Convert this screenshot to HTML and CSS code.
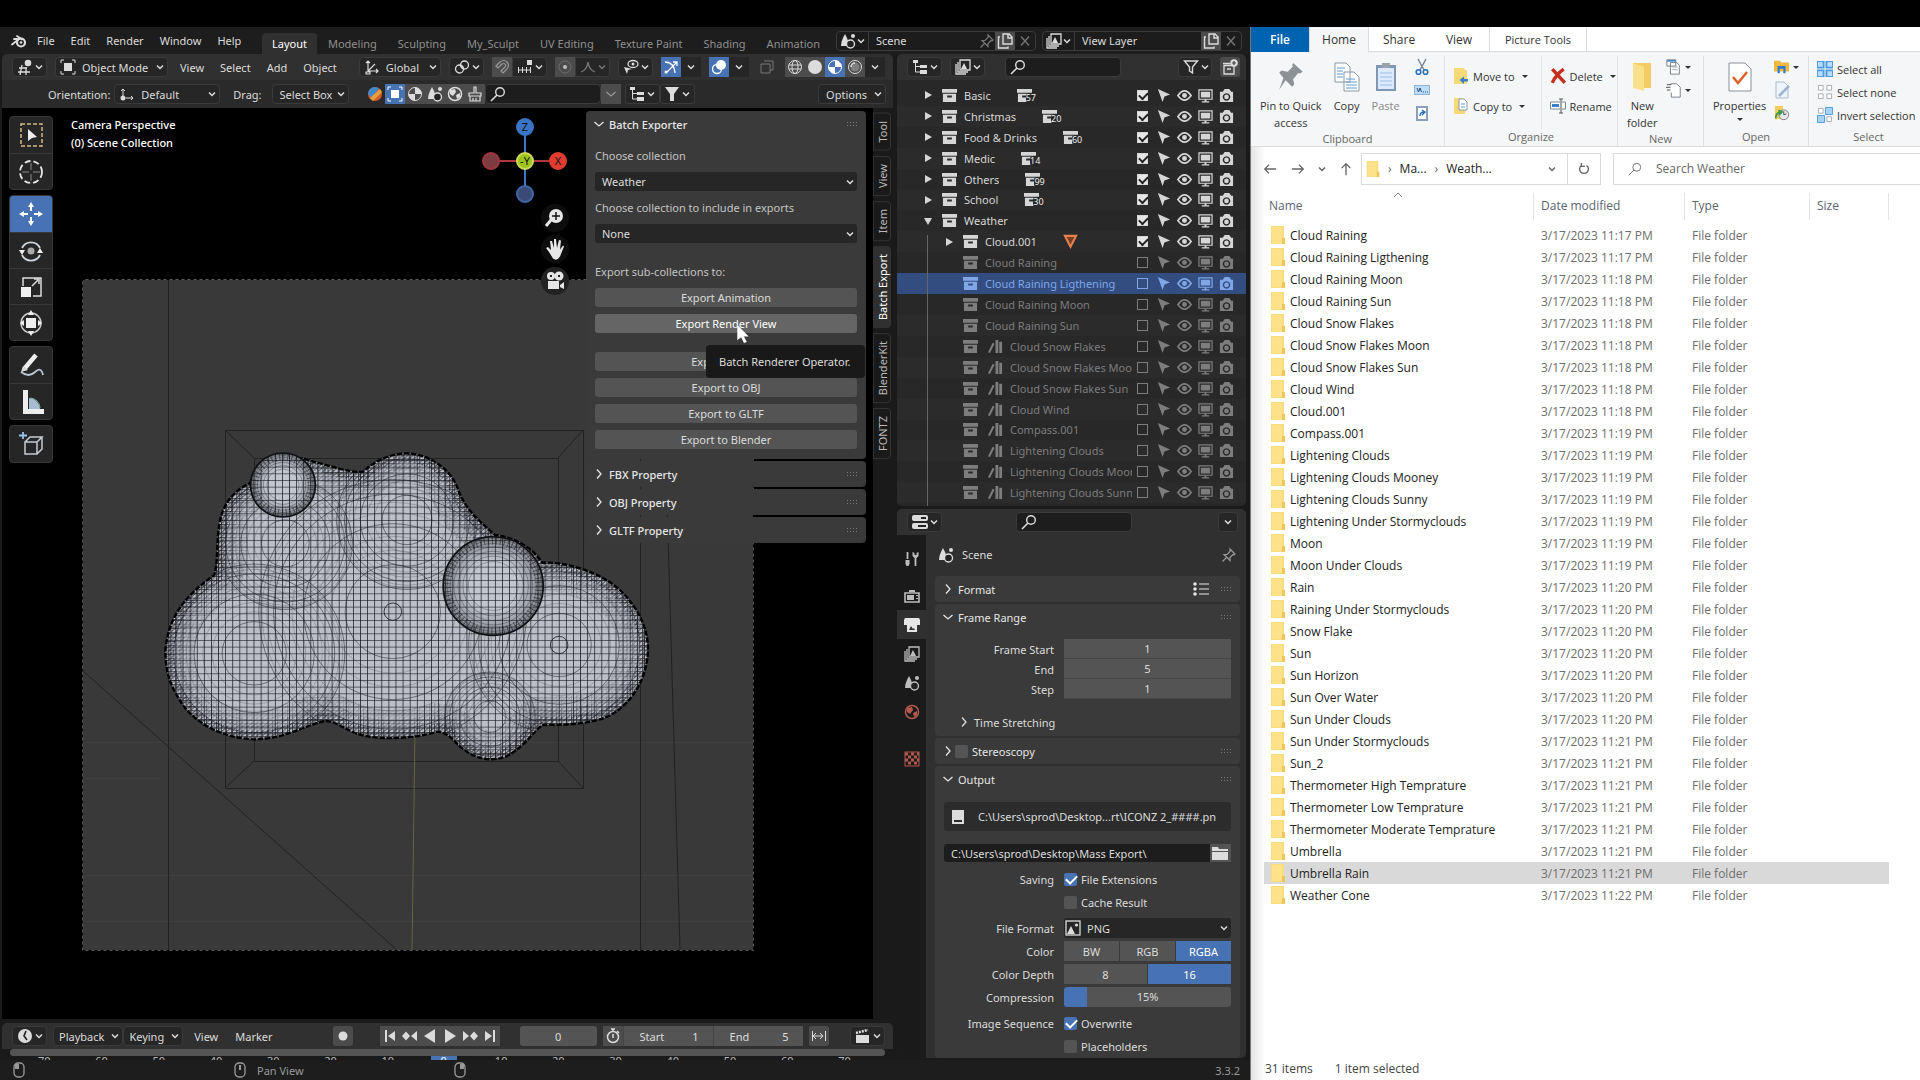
FILE: index.html
```html
<!DOCTYPE html>
<html lang="en">
<head>
  <meta charset="UTF-8" />
  <meta name="viewport" content="width=device-width, initial-scale=1.0"/>
  <title>Batch Exporter</title>
  <link rel="stylesheet" href="styles.css">
</head>
<body>
  <!-- icon sheet -->
  <svg class="sheet">
    <symbol id="down" viewBox="0 0 10 16"><path d="M2 6.500l3 3 3-3" fill="none" stroke="currentColor" stroke-width="1.500"/></symbol>
    <symbol id="right" viewBox="0 0 10 16"><path d="M3 3.500l4 4.500-4 4.500" fill="none" stroke="currentColor" stroke-width="1.300"/></symbol>
    <symbol id="open" viewBox="0 0 10 16"><path d="M.5 6l4.500 4 4.500-4" fill="none" stroke="currentColor" stroke-width="1.300"/></symbol>
    <symbol id="dots" viewBox="0 0 12 6"><path d="M0 1.500h12M0 4.500h12" stroke="currentColor" stroke-width="1" stroke-dasharray="1 2"/></symbol>
    <symbol id="blender" viewBox="0 0 16 16"><path d="M1 11.500L8 6H3M6 3l5 3.500" fill="none" stroke="currentColor" stroke-width="1.800" stroke-linecap="round"/><circle cx="10" cy="9.500" r="4" fill="none" stroke="currentColor" stroke-width="2.200"/><circle cx="10" cy="9.500" r="1.300" fill="currentColor"/></symbol>
    <symbol id="view3d" viewBox="0 0 16 16"><path d="M2 9h8M1 13h12M5 6L3 16M9 8l0 8" stroke="currentColor" stroke-width="1.300"/><circle cx="11" cy="4" r="3.300" fill="currentColor"/></symbol>
    <symbol id="object" viewBox="0 0 16 16"><rect x="4" y="4" width="8" height="8" fill="currentColor"/><path d="M1 4V1h3M12 1h3v3M15 12v3h-3M4 15H1v-3" fill="none" stroke="currentColor"/></symbol>
    <symbol id="axes" viewBox="0 0 16 16"><path d="M4 2v10h10M4 12l7-7M2 4l2-2 2 2M12 10l2 2-2 2M2 13h4v2H2z" fill="none" stroke="currentColor" stroke-width="1.200"/></symbol>
    <symbol id="orient" viewBox="0 0 16 16"><path d="M4 10V3M2 5l2-2 2 2M7 12h7M12 10l2 2-2 2" fill="none" stroke="currentColor"/><circle cx="4" cy="12" r="2.500" fill="currentColor"/></symbol>
    <symbol id="link" viewBox="0 0 16 16"><circle cx="5.500" cy="10" r="4" fill="none" stroke="currentColor" stroke-width="1.300"/><circle cx="10.500" cy="6" r="4" fill="none" stroke="currentColor" stroke-width="1.300"/><circle cx="8" cy="8" r="1.300" fill="currentColor"/></symbol>
    <symbol id="magnet" viewBox="0 0 16 16"><path d="M2 7l4-4q4-3 7 0t0 7l-4 4-2-2 4-4q1.500-2 0-3t-3 0L4 9z" fill="none" stroke="currentColor" stroke-width="1.200"/></symbol>
    <symbol id="snap" viewBox="0 0 16 16"><path d="M1 11h13M1.500 8v6M5.500 8v6M9.500 8v6M13.500 8v6" stroke="currentColor"/><rect x="10" y="1" width="5" height="5" fill="currentColor"/></symbol>
    <symbol id="prop" viewBox="0 0 16 16"><circle cx="8" cy="8" r="6" fill="none" stroke="currentColor" opacity=".4"/><circle cx="8" cy="8" r="2" fill="#bbb"/></symbol>
    <symbol id="falloff" viewBox="0 0 16 16"><path d="M1 13q6-2 7-10 1 8 7 10" fill="none" stroke="currentColor" stroke-width="1.300"/></symbol>
    <symbol id="eyecur" viewBox="0 0 16 16"><path d="M1 8l8 2-4 1-1 4z" fill="currentColor"/><ellipse cx="10" cy="5" rx="5" ry="3.500" fill="none" stroke="currentColor" stroke-width="1.300"/><circle cx="10" cy="5" r="1.500" fill="currentColor"/></symbol>
    <symbol id="gizmo" viewBox="0 0 16 16"><path d="M2 3q9 0 10 11M3 14L14 3M10 3h4v4" fill="none" stroke="currentColor" stroke-width="1.300"/><circle cx="3" cy="13" r="1.500" fill="currentColor"/></symbol>
    <symbol id="overlay" viewBox="0 0 16 16"><circle cx="10" cy="6" r="5" fill="currentColor"/><circle cx="6" cy="10" r="4.500" fill="none" stroke="currentColor" stroke-width="1.300"/></symbol>
    <symbol id="xray" viewBox="0 0 16 16"><path d="M2 5h9v9H2zM5 2h9v9h-3" fill="none" stroke="currentColor"/></symbol>
    <symbol id="wire" viewBox="0 0 16 16"><circle cx="8" cy="8" r="6.500" fill="none" stroke="currentColor"/><ellipse cx="8" cy="8" rx="3" ry="6.500" fill="none" stroke="currentColor"/><path d="M2 6h12M2 10h12" stroke="currentColor"/></symbol>
    <symbol id="solid" viewBox="0 0 16 16"><circle cx="8" cy="8" r="7" fill="currentColor"/></symbol>
    <symbol id="material" viewBox="0 0 16 16"><circle cx="8" cy="8" r="6.500" fill="none" stroke="currentColor"/><path d="M8 1.500v6.500h6.500a6.500 6.500 0 0 0-6.500-6.500M8 8v6.500A6.500 6.500 0 0 1 1.500 8z" fill="currentColor"/></symbol>
    <symbol id="rendered" viewBox="0 0 16 16"><circle cx="8" cy="8" r="6.500" fill="none" stroke="currentColor"/><circle cx="8" cy="8" r="4.500" fill="currentColor" opacity=".35"/><path d="M4 8a4 4 0 0 1 4-4" fill="none" stroke="currentColor" stroke-width="1.500"/></symbol>
    <symbol id="tree" viewBox="0 0 16 16"><path d="M1 1h5v3H1zM8 6h7v3H8zM8 11h7v4H8z" fill="currentColor"/><path d="M3.500 4v9H8M3.500 7.500H8" fill="none" stroke="currentColor"/></symbol>
    <symbol id="images" viewBox="0 0 16 16"><path d="M5 1h10v10H5zM3 3v10h10M1 5v10h10" fill="none" stroke="currentColor" stroke-width="1.300"/><path d="M6 10l3-6 3 6z" fill="currentColor"/></symbol>
    <symbol id="search" viewBox="0 0 16 16"><circle cx="10" cy="6" r="4.300" fill="none" stroke="currentColor" stroke-width="1.400"/><path d="M7 9l-6 6" stroke="currentColor" stroke-width="1.600"/></symbol>
    <symbol id="filter" viewBox="0 0 16 16"><path d="M1.500 2h13L9.500 8v6l-3-2V8z" fill="none" stroke="currentColor" stroke-width="1.400"/></symbol>
    <symbol id="funnel" viewBox="0 0 16 16"><path d="M1 1h14L10 8v7H6V8z" fill="currentColor"/></symbol>
    <symbol id="newcol" viewBox="0 0 16 16"><path d="M1 4.500h7M2 6.500h10V15H2zM5 10h4" fill="none" stroke="currentColor" stroke-width="1.300"/><circle cx="12" cy="4" r="3.800" fill="currentColor"/><path d="M12 2v4M10 4h4" stroke="#444" stroke-width="1.200"/></symbol>
    <symbol id="scene" viewBox="0 0 16 16"><path d="M5 1q5 9 3 12H1Q1 8 5 1" fill="currentColor"/><circle cx="10.500" cy="11" r="4" fill="#222" stroke="currentColor" stroke-width="1.400"/><circle cx="13" cy="3" r="2" fill="currentColor"/></symbol>
    <symbol id="pin" viewBox="0 0 16 16"><path d="M9 2l5 5-1 1-1-.5-3 3v3L3 7.500h3l3-3zM5.500 10.500L1.500 14.500" fill="none" stroke="currentColor" stroke-width="1.200"/></symbol>
    <symbol id="copy" viewBox="0 0 16 16"><path d="M6 1h6l3 3v7H6zM3 4H1.500v11H11v-1.500M11 1v4h4" fill="none" stroke="currentColor" stroke-width="1.400"/></symbol>
    <symbol id="x" viewBox="0 0 16 16"><path d="M4 3.500l8 9M12 3.500l-8 9" stroke="currentColor" stroke-width="1.300"/></symbol>
    <symbol id="coll" viewBox="0 0 16 16"><path d="M0 1h16v4H0zM1 6h14v9H1zM5.500 8v2h5V8z" fill="currentColor" fill-rule="evenodd"/></symbol>
    <symbol id="cursor" viewBox="0 0 16 16"><path d="M2 1l13 6-6 2-2 6z" fill="currentColor"/></symbol>
    <symbol id="eye" viewBox="0 0 16 16"><path d="M1 8q7-10 14 0-7 10-14 0z" fill="none" stroke="currentColor" stroke-width="1.800"/><circle cx="8" cy="8" r="2.600" fill="currentColor"/></symbol>
    <symbol id="monitor" viewBox="0 0 16 16"><path d="M1 2h14v10H1z" fill="none" stroke="currentColor" stroke-width="1.300"/><path d="M3 4h10v6H3zM4 14h8v1.500H4zM7 12h2v3H7z" fill="currentColor"/></symbol>
    <symbol id="camera" viewBox="0 0 16 16"><path d="M1 4h3l2-3h5l2 3h2v11H1zM8 5.500a4 4 0 1 0 .01 0z" fill="currentColor" fill-rule="evenodd"/><circle cx="8" cy="9.500" r="2.500" fill="currentColor"/></symbol>
    <symbol id="mesh" viewBox="0 0 16 16"><path d="M2 2h12L8 13.500z" fill="#7a3f22" stroke="#e8824d" stroke-width="2.200"/></symbol>
    <symbol id="books" viewBox="0 0 16 16"><path d="M5 4l2 1-5 10-2-1zM8 1h3v14H8zM12 3h3v12h-3z" fill="currentColor"/></symbol>
    <symbol id="tools" viewBox="0 0 16 16"><path d="M3.500 1v7M11.500 6v9" stroke="currentColor" stroke-width="1.800"/><path d="M1.500 9h4v4l-1 2h-2l-1-2zM8.500 1v4l2 2h2l2-2V1l-2 1v2h-2V2z" fill="currentColor"/></symbol>
    <symbol id="tv" viewBox="0 0 16 16"><path d="M1 5h14v9H1z" fill="none" stroke="currentColor" stroke-width="1.600"/><path d="M3 7h7v5H3zM12 7h2v1h-2zM12 10h2v1h-2zM5 2h6v2H5z" fill="currentColor"/></symbol>
    <symbol id="printer" viewBox="0 0 16 16"><path d="M0 3l1-2h14l1 2v5H0zM3 7h10v8H3z" fill="currentColor"/><path d="M5 13l2-4 2 3 1-1 1 2z" fill="#303030"/></symbol>
    <symbol id="world" viewBox="0 0 16 16"><circle cx="8" cy="8" r="6.500" fill="none" stroke="currentColor" stroke-width="1.500"/><path d="M3 4l5-1 1 3-3 4-3-2zM9 9l4-2v4l-3 2z" fill="currentColor"/></symbol>
    <symbol id="checker" viewBox="0 0 16 16"><rect x="1" y="1" width="14" height="14" fill="none" stroke="currentColor"/><path d="M1 3h14M1 9h14" stroke="currentColor" stroke-width="3" stroke-dasharray="3 3"/><path d="M4 6h12M4 12h12" stroke="currentColor" stroke-width="3" stroke-dasharray="3 3"/></symbol>
    <symbol id="disk" viewBox="0 0 16 16"><path d="M2 1h12v14H2zM4 11h8v2H4z" fill="currentColor" fill-rule="evenodd"/></symbol>
    <symbol id="folder" viewBox="0 0 16 16"><path d="M0 2h6l1 2h9v2H0zM0 7h16v8H0z" fill="currentColor"/></symbol>
    <symbol id="image" viewBox="0 0 16 16"><rect x="1" y="1" width="14" height="14" fill="none" stroke="currentColor" stroke-width="1.300"/><path d="M2 14l4-8 4 8z" fill="currentColor"/><circle cx="11.500" cy="5" r="1.600" fill="currentColor"/></symbol>
    <symbol id="presets" viewBox="0 0 16 16"><path d="M6 3h10M6 8h10M6 13h10" stroke="currentColor" stroke-width="1.200"/><circle cx="2" cy="3" r="1.800" fill="currentColor"/><circle cx="2" cy="8" r="1.800" fill="currentColor"/><circle cx="2" cy="13" r="1.800" fill="currentColor"/></symbol>
    <symbol id="props" viewBox="0 0 16 16"><rect x="0" y="1" width="16" height="6" rx="2" fill="currentColor"/><rect x="0" y="9" width="16" height="6" rx="2" fill="currentColor"/><path d="M9 3h5v2H9zM6 11h8v2H6z" fill="#222"/></symbol>
    <symbol id="clock" viewBox="0 0 16 16"><circle cx="8" cy="8" r="7" fill="currentColor"/><path d="M9 3L7 8l3 4" fill="none" stroke="#222" stroke-width="1.600"/></symbol>
    <symbol id="dot" viewBox="0 0 16 16"><circle cx="8" cy="8" r="4.500" fill="currentColor"/></symbol>
    <symbol id="first" viewBox="0 0 16 16"><path d="M3 2h2v12H3zM13 3v10L6 8z" fill="currentColor"/></symbol>
    <symbol id="prevkey" viewBox="0 0 16 16"><path d="M0 8l4-4.500L8 8l-4 4.500zM15 3v10L9 8z" fill="currentColor"/></symbol>
    <symbol id="playback" viewBox="0 0 16 16"><path d="M13 1v14L2 8z" fill="currentColor"/></symbol>
    <symbol id="stopwatch" viewBox="0 0 16 16"><circle cx="8" cy="9" r="5.500" fill="none" stroke="currentColor" stroke-width="1.500"/><path d="M6 1h4M8 1v3M12 3l2 2M8 6v4" stroke="currentColor" stroke-width="1.500"/></symbol>
    <symbol id="range" viewBox="0 0 16 16"><path d="M1.500 3v10M14.500 3v10M2 8h10M5 5L2 8l3 3M9 5l3 3-3 3" fill="none" stroke="currentColor"/></symbol>
    <symbol id="clapper" viewBox="0 0 16 16"><path d="M1 7h13v8H1z" fill="currentColor"/><path d="M1 5l12-3" stroke="currentColor" stroke-width="2.500" stroke-dasharray="2 1"/></symbol>
    <symbol id="brush" viewBox="0 0 16 16"><path d="M7 1h2v6h5v3H2V7h5zM3 10v5h10v-5M6 15v-3M9 15v-3" fill="none" stroke="currentColor" stroke-width="1.200"/></symbol>
    <symbol id="mouse" viewBox="0 0 12 16"><rect x="1" y="1" width="10" height="14" rx="4" fill="none" stroke="currentColor" stroke-width="1.300"/></symbol>
    <!-- explorer icons -->
    <symbol id="winfolder" viewBox="0 0 14 18"><path d="M0 0h13v14h1v4H0z" fill="#f9dc7c"/><path d="M11 12h3v6h-3z" fill="#eec558"/><path d="M1 1h10v16H1z" fill="#fde28a"/></symbol>
    <symbol id="tack" viewBox="0 0 24 28"><path d="M14 1l9 8-3 2-1-1-5 6 1 5-2 2-6-6-6 9 4-11-4-5 2-2 6 1 5-5-1-1z" fill="#8d9299"/></symbol>
    <symbol id="pages" viewBox="0 0 26 30"><path d="M1 1h11l4 4v15H1zM10 10h10l5 5v14H10z" fill="#fff" stroke="#8a97a5"/><path d="M3 6h8M3 9h6M3 12h6M3 15h6M12 17h9M12 20h11M12 23h11M12 26h11" stroke="#5b9bd5"/></symbol>
    <symbol id="clip" viewBox="0 0 22 30"><rect x="1" y="3" width="20" height="26" fill="#7e97b5"/><rect x="3" y="6" width="16" height="21" fill="#dceafb"/><path d="M7 1h8v5H7z" fill="#9aa3ad"/><path d="M5 11h12M5 15h12M5 19h12M5 23h12" stroke="#9cbde2"/></symbol>
    <symbol id="cut" viewBox="0 0 14 18"><path d="M3 1l6 11M11 1L5 12" stroke="#7b8794" stroke-width="1.500"/><circle cx="3.500" cy="14" r="2.300" fill="none" stroke="#2c6fbb" stroke-width="1.600"/><circle cx="10.500" cy="14" r="2.300" fill="none" stroke="#2c6fbb" stroke-width="1.600"/></symbol>
    <symbol id="path" viewBox="0 0 16 10"><rect x=".5" y=".5" width="15" height="9" fill="#bcdcf7" stroke="#8cb3d9"/><path d="M3 3l1.500 4L6 3l1.500 4M9 7h1M11 7h1M13 7h1" stroke="#28507c" fill="none"/></symbol>
    <symbol id="shortcut" viewBox="0 0 14 18"><rect x="1" y="2" width="12" height="15" fill="#8ba0b8"/><rect x="3" y="4" width="8" height="11" fill="#fff"/><path d="M5 12q0-4 4-4M7 6l3 2-3 3" fill="none" stroke="#2c6fbb" stroke-width="1.400"/></symbol>
    <symbol id="moveto" viewBox="0 0 16 18"><path d="M1 1h10l1 2h2v14H1z" fill="#f8d978"/><path d="M15 12h-4V9.500L6.500 13l4.500 4v-2.500h4z" fill="#3b7fc9"/></symbol>
    <symbol id="copyto" viewBox="0 0 16 18"><path d="M1 1h8l1 2h2v14H1z" fill="#f8d978"/><path d="M6 2h5l3 3v8H6z" fill="#fff" stroke="#8a97a5"/><path d="M8 7h4M8 10h4" stroke="#5b9bd5"/></symbol>
    <symbol id="delete" viewBox="0 0 14 14"><path d="M2 1l11 12M12 1Q5 6 2 13" stroke="#c62f1d" stroke-width="3" fill="none"/></symbol>
    <symbol id="rename" viewBox="0 0 16 16"><path d="M10 4H.5v7H10M12 4h3.500v7H12" fill="#fff" stroke="#7b8794"/><path d="M2 6h7v3H2z" fill="#3b7fc9"/><path d="M9 1h4M9 15h4M11 1v14" stroke="#555"/></symbol>
    <symbol id="bigfolder" viewBox="0 0 20 30"><path d="M1 1h18v25H4z" fill="#f3cd63"/><path d="M1 1l11 4v24L1 26z" fill="#fbe08b"/></symbol>
    <symbol id="newitem" viewBox="0 0 18 18"><path d="M1 1h10v7H1zM5 4h7l3 3v10H5z" fill="#fff" stroke="#6d7680"/><path d="M1 2h10" stroke="#4c88c9" stroke-width="2"/><path d="M7 9h6M7 12h6" stroke="#9aa3ad"/></symbol>
    <symbol id="easy" viewBox="0 0 18 18"><path d="M5 2h7l4 4v11H6v-5" fill="#fff" stroke="#6d7680"/><path d="M1 3h5M0 6h5M1 9h4" stroke="#444"/></symbol>
    <symbol id="check" viewBox="0 0 24 30"><path d="M1 1h16l6 6v22H1z" fill="#fff" stroke="#8a929b"/><path d="M5 15l5 6 9-11" fill="none" stroke="#d9622b" stroke-width="2.500"/></symbol>
    <symbol id="openwith" viewBox="0 0 18 16"><path d="M0 1h7l1 2h9v10H0z" fill="#f0b840"/><path d="M4 15V7h9v8h-2.500v-5H6.500v5z" fill="#2c7cd1"/></symbol>
    <symbol id="edit" viewBox="0 0 16 18"><path d="M2 1h8l4 4v12H2z" fill="#eef4fb" stroke="#a9bace"/><path d="M15 5L5 15" stroke="#9db4cf" stroke-width="2.500"/></symbol>
    <symbol id="history" viewBox="0 0 18 18"><path d="M1 1h9v15H1z" fill="#f3cd63"/><circle cx="11" cy="11" r="5.500" fill="#e6e9ec" stroke="#777"/><path d="M11 7v4l3-1" fill="none" stroke="#444"/><path d="M2 15q0-6 5-7M5 6l4 2-3 3" fill="none" stroke="#3b9a45" stroke-width="2"/></symbol>
    <symbol id="selall" viewBox="0 0 17 17"><path d="M0 0h8v8H0zM9 0h8v8H9zM0 9h8v8H0zM9 9h8v8H9z" fill="#4d9be0"/><path d="M1 1h5v5H1zM11 1h5v5h-5zM1 11h5v5H1zM11 11h5v5h-5z" fill="#b8dcfa"/></symbol>
    <symbol id="selnone" viewBox="0 0 17 17"><path d="M1.500 1.500h5v5h-5zM10.500 1.500h5v5h-5zM1.500 10.500h5v5h-5zM10.500 10.500h5v5h-5z" fill="#fff" stroke="#a5abb2"/></symbol>
    <symbol id="selinv" viewBox="0 0 17 17"><path d="M1.500 1.500h5v5h-5zM10.500 10.500h5v5h-5z" fill="#fff" stroke="#a5abb2"/><path d="M9 .5h7.500V8H9zM.5 9H8v7.500H.5z" fill="#a8d3f7" stroke="#4d9be0"/></symbol>
    <symbol id="back" viewBox="0 0 16 16"><path d="M15 8H2M7 3L2 8l5 5" fill="none" stroke="currentColor" stroke-width="1.500"/></symbol>
    <symbol id="refresh" viewBox="0 0 16 16"><path d="M5 4a5 5 0 1 0 6 0M5 1v4h4" fill="none" stroke="currentColor" stroke-width="1.500"/></symbol>
    <symbol id="lens" viewBox="0 0 16 16"><circle cx="10" cy="6" r="4.500" fill="none" stroke="currentColor"/><path d="M7 9l-6 6" stroke="currentColor"/></symbol>
  </svg>

  <main class="blender">
    <header class="topbar">
      <svg class="i logo"><use href="#blender"/></svg>
      <nav class="menus">
        <button>File</button><button>Edit</button><button>Render</button><button>Window</button><button>Help</button>
      </nav>
      <nav class="workspaces">
        <button class="active">Layout</button><button>Modeling</button><button>Sculpting</button><button>My_Sculpt</button><button>UV Editing</button><button>Texture Paint</button><button>Shading</button><button>Animation</button>
      </nav>
      <div class="idblock">
        <button><svg class="i"><use href="#scene"/></svg><svg class="c"><use href="#down"/></svg></button>
        <input type="text" value="Scene" aria-label="Scene">
        <svg class="i dim"><use href="#pin"/></svg>
        <button class="lit" aria-label="New scene"><svg class="i"><use href="#copy"/></svg></button>
        <button class="dim" aria-label="Remove scene"><svg class="i"><use href="#x"/></svg></button>
      </div>
      <div class="idblock">
        <button><svg class="i"><use href="#images"/></svg><svg class="c"><use href="#down"/></svg></button>
        <input type="text" value="View Layer" aria-label="View layer">
        <button class="lit" aria-label="New view layer"><svg class="i"><use href="#copy"/></svg></button>
        <button class="dim" aria-label="Remove view layer"><svg class="i"><use href="#x"/></svg></button>
      </div>
    </header>

    <div class="areas">
      <div class="left">
        <section class="view3d">
          <div class="bar">
            <button class="drop"><svg class="i"><use href="#view3d"/></svg><svg class="c"><use href="#down"/></svg></button>
            <label class="pick mode"><svg class="i"><use href="#object"/></svg><select aria-label="Mode"><option>Object Mode</option></select><svg class="c"><use href="#down"/></svg></label>
            <nav class="menus viewmenus"><button>View</button><button>Select</button><button>Add</button><button>Object</button></nav>
            <label class="pick global"><svg class="i"><use href="#axes"/></svg><select aria-label="Transform orientation"><option>Global</option></select><svg class="c"><use href="#down"/></svg></label>
            <button class="drop"><svg class="i"><use href="#link"/></svg><svg class="c"><use href="#down"/></svg></button>
            <div class="joined"><button class="lit dim"><svg class="i"><use href="#magnet"/></svg></button><button class="drop"><svg class="i"><use href="#snap"/></svg><svg class="c"><use href="#down"/></svg></button></div>
            <div class="joined"><button class="lit dim"><svg class="i"><use href="#prop"/></svg></button><button class="drop dim"><svg class="i"><use href="#falloff"/></svg><svg class="c"><use href="#down"/></svg></button></div>
            <button class="drop push"><svg class="i"><use href="#eyecur"/></svg><svg class="c"><use href="#down"/></svg></button>
            <div class="joined"><button class="on"><svg class="i"><use href="#gizmo"/></svg></button><button class="tiny"><svg class="c"><use href="#down"/></svg></button></div>
            <div class="joined"><button class="on"><svg class="i"><use href="#overlay"/></svg></button><button class="tiny"><svg class="c"><use href="#down"/></svg></button></div>
            <button class="sq dim"><svg class="i"><use href="#xray"/></svg></button>
            <div class="joined"><button class="lit"><svg class="i"><use href="#wire"/></svg></button><button class="lit"><svg class="i"><use href="#solid"/></svg></button><button class="on"><svg class="i"><use href="#material"/></svg></button><button class="lit"><svg class="i"><use href="#rendered"/></svg></button><button class="tiny"><svg class="c"><use href="#down"/></svg></button></div>
          </div>
          <div class="bar toolbar2">
            <label for="orient-pick" class="cap">Orientation:</label>
            <div class="pick orient"><svg class="i"><use href="#orient"/></svg><select id="orient-pick"><option>Default</option></select><svg class="c"><use href="#down"/></svg></div>
            <label for="drag" class="cap">Drag:</label>
            <div class="pick drag"><select id="drag"><option>Select Box</option></select><svg class="c"><use href="#down"/></svg></div>
            <div class="joined assets">
              <svg class="i ball" viewBox="0 0 16 16"><circle cx="8" cy="8" r="7" fill="#d9582f"/><path d="M8 1a7 7 0 0 0-7 7l3 3 8-8a7 7 0 0 0-4-2" fill="#3c8bd0"/><path d="M3 12l10-9 2 3L6 15z" fill="#e0a13a"/></svg>
              <button class="on"><svg class="i"><use href="#object"/></svg></button><button class="lit"><svg class="i"><use href="#material"/></svg></button><button class="lit"><svg class="i"><use href="#scene"/></svg></button><button class="lit"><svg class="i"><use href="#world"/></svg></button><button class="lit"><svg class="i"><use href="#brush"/></svg></button>
              <label class="find"><svg class="i"><use href="#search"/></svg><input type="search" aria-label="Search"></label>
              <button class="lit dim"><svg class="c"><use href="#open"/></svg></button>
            </div>
            <div class="joined"><button class="drop"><svg class="i"><use href="#tree"/></svg><svg class="c"><use href="#down"/></svg></button><button class="drop"><svg class="i"><use href="#funnel"/></svg><svg class="c"><use href="#down"/></svg></button></div>
            <button class="drop push options">Options<svg class="c"><use href="#down"/></svg></button>
          </div>

          <div class="canvas">
            <svg class="scene3d" viewBox="2 108 871 911" preserveAspectRatio="xMinYMin slice">
              <defs>
                <pattern id="grid" width="21" height="20" patternUnits="userSpaceOnUse"><path d="M0 .5h21M1 0v20" stroke="#15161a" stroke-width="2.500"/></pattern>
                <pattern id="fine" width="15" height="13" patternUnits="userSpaceOnUse"><path d="M0 1h15M1 0v13M0 13L15 0" stroke="#101114" stroke-width="2"/></pattern>
                <radialGradient id="ballfill"><stop offset=".5" stop-color="#c2c6ce"/><stop offset="1" stop-color="#85888e"/></radialGradient>
                <path id="cloud" d="M325 190C350 120 470 100 500 122C560 135 620 160 660 155C690 125 740 100 790 100C860 103 920 150 940 205C960 265 1000 300 1050 345C1100 350 1160 380 1190 428C1260 425 1360 455 1420 510C1480 570 1503 630 1503 690C1500 790 1440 870 1370 895C1310 915 1240 915 1190 915C1160 940 1150 965 1100 1000C1060 1028 1000 1022 960 990C930 970 920 940 880 935C800 960 690 960 640 940C600 925 580 905 550 903C500 910 440 955 340 958C240 955 170 910 130 860C90 800 75 760 75 690C85 590 130 530 220 465C232 420 225 370 235 310C245 250 280 210 325 190z"/>
                <clipPath id="cloudclip"><use href="#cloud"/></clipPath>
              </defs>
              <rect x="82" y="279" width="671" height="671" fill="#393939"/>
              <g fill="none" stroke="#222" stroke-width="1">
                <path d="M82 742.500h671M82 778.500h78M82 875.500h671M82 921.500h671" stroke="#404040"/>
                <path d="M168.500 279v671M225.500 430.500h358v358h-358zM254.500 458.500h304v303h-304zM225 430l29 28M583 430l-25 28M225 788l29-27M583 788l-25-27M640.500 279v671M667 500l13 450M82 670l315 280"/>
                <path d="M415 730l-3 220" stroke="#66663c"/>
                <rect x="82.500" y="279.500" width="671" height="671" stroke="#000" stroke-dasharray="3 3"/>
                <rect x="82.500" y="279.500" width="671" height="671" stroke="#555" stroke-dasharray="3 3" stroke-dashoffset="3"/>
              </g>
              <g transform="translate(140 420) scale(.338 .3333)">
                <use href="#cloud" fill="#bcbfc8"/>
                <g clip-path="url(#cloudclip)">
                  <use href="#cloud" fill="url(#grid)"/>
                  <g id="rings" fill="none" stroke="#1b1c20" stroke-width="2.500"></g>
                  <g fill="none" stroke="url(#fine)">
                    <use href="#cloud" stroke-width="170" opacity=".3"/>
                    <use href="#cloud" stroke-width="100" opacity=".35"/>
                    <use href="#cloud" stroke-width="50" opacity=".7"/>
                  </g>
                </g>
                <use href="#cloud" fill="none" stroke="#000" stroke-width="7" stroke-dasharray="16 5"/>
                <g id="balls" stroke="#101114"></g>
              </g>
              <!-- axis gizmo -->
              <g stroke-width="2">
                <path d="M525 127v67" stroke="#3a78c8"/><path d="M491 161h67" stroke="#b0353f"/>
                <circle cx="525" cy="127" r="8" fill="#3a74c4" stroke="#3a74c4"/><circle cx="558" cy="161" r="8" fill="#e03c31" stroke="#e03c31"/>
                <circle cx="491" cy="161" r="8" fill="#7b3b40" stroke="#a0383f"/><circle cx="525" cy="194" r="8" fill="#3a4a75" stroke="#3f68a8"/>
                <circle cx="525" cy="161" r="8" fill="#9bc51d" stroke="#d0d860"/>
              </g>
              <g class="axis"><text x="525" y="131">Z</text><text x="558" y="165">X</text><text x="525" y="165">-Y</text></g>
              <g fill="#0d0d0d"><circle cx="555" cy="218" r="14"/><circle cx="555" cy="249" r="14"/><circle cx="555" cy="281" r="14" fill="#222"/></g>
              <g fill="#e6e6e6">
                <circle cx="556" cy="216" r="7"/><path d="M551 220l-5 6" stroke="#e6e6e6" stroke-width="3"/><path d="M552 216h8M556 212v8" stroke="#111" stroke-width="1.500"/>
                <path d="M549 252l-3-4 2-1 3 3-1-9h2l2 7v-9h2l1 9 2-8 2 .5-1 9 3-4 1 1-4 10q-3 5-7 2z"/>
                <circle cx="551" cy="276" r="4"/><circle cx="559" cy="276" r="4.500"/><path d="M548 281h11v8h-11zM560 285l4-3v7l-4-2z"/><path d="M550 276h2M558 276h2" stroke="#222" stroke-width="2"/>
              </g>
            </svg>
            <div class="info">Camera Perspective<br>(0) Scene Collection</div>
            <div class="tools">
              <div><button aria-label="Select Box"><svg viewBox="0 0 28 28"><rect x="4" y="3" width="21" height="22" fill="none" stroke="#d8b982" stroke-width="1.500" stroke-dasharray="4 2"/><path d="M11 8l9 8-5 1-4 3z" fill="#eee"/></svg></button><button aria-label="Cursor"><svg viewBox="0 0 28 28"><circle cx="14" cy="14" r="11" fill="none" stroke="#e8e8e8" stroke-width="1.800" stroke-dasharray="6 3"/><path d="M14 5v7M14 16v7M5 14h7M16 14h7" stroke="#888"/></svg></button></div>
              <div><button class="on" aria-label="Move"><svg viewBox="0 0 28 28"><path d="M14 2l3 5h-6zM14 26l3-5h-6zM2 14l5-3v6zM26 14l-5-3v6z" fill="#fff"/><path d="M14 6v5M14 17v5M6 14h5M17 14h5" stroke="#fff" stroke-width="2"/></svg></button><button aria-label="Rotate"><svg viewBox="0 0 28 28"><path d="M5 11a10 10 0 0 1 18 0M23 18a10 10 0 0 1-18 0" fill="none" stroke="#cfd6de" stroke-width="1.800"/><circle cx="14" cy="14" r="3.500" fill="#aaa"/><path d="M2 13h6l-3 5zM20 16h6l-3-5z" fill="#eee"/></svg></button><button aria-label="Scale"><svg viewBox="0 0 28 28"><path d="M6 13V5h18v18h-8" fill="none" stroke="#ddd" stroke-width="1.500"/><rect x="4" y="14" width="10" height="10" fill="#eee"/><path d="M15 13l6-6M17 6h5v5" fill="none" stroke="#ddd" stroke-width="1.500"/></svg></button><button aria-label="Transform"><svg viewBox="0 0 28 28"><circle cx="14" cy="14" r="10" fill="none" stroke="#ccc" stroke-width="1.500"/><path d="M9 9h10v10H9zM14 1l3 5h-6zM14 27l3-5h-6zM3 14l4-3v6zM25 14l-4-3v6z" fill="#eee"/></svg></button></div>
              <div><button aria-label="Annotate"><svg viewBox="0 0 28 28"><path d="M19 4L8 17" stroke="#eee" stroke-width="4.500"/><path d="M4 21q8 6 14 0t8 3" fill="none" stroke="#b8c6d6" stroke-width="1.800"/><path d="M4 21l2-6 5 4z" fill="#ddd"/></svg></button><button aria-label="Measure"><svg viewBox="0 0 28 28"><path d="M6 2h5v19h16v5H6z" fill="#eee"/><path d="M12 10q10 1 11 11H12z" fill="#a9bccf"/><path d="M13 10a10 10 0 0 1 10 10" fill="none" stroke="#7a9" /></svg></button></div>
              <div><button aria-label="Add Cube"><svg viewBox="0 0 28 28"><path d="M8 12h12v12H8zM8 12l5-5h12l-5 5M25 7v12l-5 5" fill="none" stroke="#c4ccd4" stroke-width="1.500"/><path d="M6 2v7M2 5.500h8" stroke="#9cc4ec" stroke-width="1.800"/></svg></button></div>
            </div>

            <aside class="npanel">
              <section>
                <h3><svg class="c"><use href="#open"/></svg>Batch Exporter<svg class="grip"><use href="#dots"/></svg></h3>
                <div class="stack">
                  <label for="col">Choose collection</label>
                  <div class="pick wide"><select id="col"><option>Weather</option></select><svg class="c"><use href="#down"/></svg></div>
                  <label for="inc">Choose collection to include in exports</label>
                  <div class="pick wide"><select id="inc"><option>None</option></select><svg class="c"><use href="#down"/></svg></div>
                  <p class="apart">Export sub-collections to:</p>
                  <button>Export Animation</button>
                  <button class="hover">Export Render View</button>
                  <button class="apart">Export to FBX</button>
                  <button>Export to OBJ</button>
                  <button>Export to GLTF</button>
                  <button>Export to Blender</button>
                </div>
              </section>
              <section><h3><svg class="c"><use href="#right"/></svg>FBX Property<svg class="grip"><use href="#dots"/></svg></h3></section>
              <section><h3><svg class="c"><use href="#right"/></svg>OBJ Property<svg class="grip"><use href="#dots"/></svg></h3></section>
              <section><h3><svg class="c"><use href="#right"/></svg>GLTF Property<svg class="grip"><use href="#dots"/></svg></h3></section>
              <div class="tip">Batch Renderer Operator.</div>
              <svg class="pointer" viewBox="0 0 12 20"><path d="M0 0v16l4-3 3 6 3-1-3-6h5z" fill="#fff"/></svg>
            </aside>
            <nav class="vtabs"><button>Tool</button><button>View</button><button>Item</button><button class="active">Batch Export</button><button>BlenderKit</button><button>FONTZ</button></nav>
          </div>
        </section>

        <section class="timeline">
          <div class="bar">
            <button class="drop"><svg class="i"><use href="#clock"/></svg><svg class="c"><use href="#down"/></svg></button>
            <div class="joined"><button class="drop">Playback<svg class="c"><use href="#down"/></svg></button><button class="drop">Keying<svg class="c"><use href="#down"/></svg></button></div>
            <nav class="menus"><button>View</button><button>Marker</button></nav>
            <button class="lit sq rec" aria-label="Auto keying"><svg class="i"><use href="#dot"/></svg></button>
            <div class="joined play"><button class="lit"><svg class="i"><use href="#first"/></svg></button><button class="lit"><svg class="i"><use href="#prevkey"/></svg></button><button class="lit"><svg class="i"><use href="#playback"/></svg></button><button class="lit flip"><svg class="i"><use href="#playback"/></svg></button><button class="lit flip"><svg class="i"><use href="#prevkey"/></svg></button><button class="lit flip"><svg class="i"><use href="#first"/></svg></button></div>
            <input class="field frame" type="text" value="0" aria-label="Current frame">
            <div class="joined"><button class="lit"><svg class="i"><use href="#stopwatch"/></svg></button>
              <label class="field se">Start<input type="text" value="1"></label><label class="field se">End<input type="text" value="5"></label></div>
            <button class="lit sq"><svg class="i"><use href="#range"/></svg></button>
            <button class="drop push"><svg class="i"><use href="#clapper"/></svg><svg class="c"><use href="#down"/></svg></button>
          </div>
          <div class="scroll"></div>
          <div class="ruler" id="ruler"></div>
        </section>
      </div>

      <div class="right">
        <section class="outliner">
          <div class="bar">
            <button class="drop"><svg class="i"><use href="#tree"/></svg><svg class="c"><use href="#down"/></svg></button>
            <button class="drop"><svg class="i"><use href="#images"/></svg><svg class="c"><use href="#down"/></svg></button>
            <label class="find"><svg class="i"><use href="#search"/></svg><input type="search" aria-label="Filter outliner"></label>
            <button class="drop push"><svg class="i"><use href="#filter"/></svg><svg class="c"><use href="#down"/></svg></button>
            <button class="lit sq"><svg class="i"><use href="#newcol"/></svg></button>
          </div>
          <div class="rows" id="rows"></div>
        </section>

        <section class="properties">
          <div class="bar">
            <button class="drop"><svg class="i"><use href="#props"/></svg><svg class="c"><use href="#down"/></svg></button>
            <label class="find"><svg class="i"><use href="#search"/></svg><input type="search" aria-label="Search properties"></label>
            <button class="tiny boxed"><svg class="c"><use href="#down"/></svg></button>
          </div>
          <div class="body">
            <nav class="ptabs">
              <button><svg class="i"><use href="#tools"/></svg></button><button class="gap"><svg class="i"><use href="#tv"/></svg></button><button class="active"><svg class="i"><use href="#printer"/></svg></button><button><svg class="i"><use href="#images"/></svg></button><button><svg class="i"><use href="#scene"/></svg></button><button class="red"><svg class="i"><use href="#world"/></svg></button><button class="red gap2"><svg class="i"><use href="#checker"/></svg></button>
            </nav>
            <div class="pbody">
              <div class="crumb"><svg class="i"><use href="#scene"/></svg>Scene<svg class="i pinned"><use href="#pin"/></svg></div>
              <section><h3><svg class="c"><use href="#right"/></svg>Format<svg class="i presets"><use href="#presets"/></svg><svg class="grip"><use href="#dots"/></svg></h3></section>
              <section>
                <h3><svg class="c"><use href="#open"/></svg>Frame Range<svg class="grip"><use href="#dots"/></svg></h3>
                <div class="frames">
                  <label class="row">Frame Start<input class="field" type="text" value="1"></label>
                  <label class="row">End<input class="field" type="text" value="5"></label>
                  <label class="row">Step<input class="field" type="text" value="1"></label>
                </div>
                <h4><svg class="c"><use href="#right"/></svg>Time Stretching</h4>
              </section>
              <section><h3 class="tight"><svg class="c"><use href="#right"/></svg><label class="tick"><input type="checkbox">Stereoscopy</label><svg class="grip"><use href="#dots"/></svg></h3></section>
              <section class="output">
                <h3><svg class="c"><use href="#open"/></svg>Output<svg class="grip"><use href="#dots"/></svg></h3>
                <div class="filebox"><svg class="i"><use href="#disk"/></svg><span>C:\Users\sprod\Desktop...rt\ICONZ 2_####.pn</span></div>
                <div class="pathbox"><input type="text" value="C:\Users\sprod\Desktop\Mass Export\" aria-label="Output path"><button aria-label="Browse"><svg class="i"><use href="#folder"/></svg></button></div>
                <div class="fields">
                  <div class="row">Saving<label class="tick"><input type="checkbox" checked>File Extensions</label></div>
                  <div class="row"><label class="tick"><input type="checkbox">Cache Result</label></div>
                  <div class="row apart"><label for="fmt">File Format</label><div class="pick wide"><svg class="i"><use href="#image"/></svg><select id="fmt"><option>PNG</option></select><svg class="c"><use href="#down"/></svg></div></div>
                  <div class="row">Color<div class="seg"><button>BW</button><button>RGB</button><button class="on">RGBA</button></div></div>
                  <div class="row">Color Depth<div class="seg"><button>8</button><button class="on">16</button></div></div>
                  <div class="row"><label for="comp">Compression</label><div class="slider"><input type="range" id="comp" value="15"><output>15%</output></div></div>
                  <div class="row apart">Image Sequence<label class="tick"><input type="checkbox" checked>Overwrite</label></div>
                  <div class="row"><label class="tick"><input type="checkbox">Placeholders</label></div>
                </div>
              </section>
            </div>
          </div>
        </section>
      </div>
    </div>

    <footer class="status">
      <svg class="m"><use href="#mouse"/><path d="M2 2h4v5H2z" fill="#999"/></svg>
      <span><svg class="m"><use href="#mouse"/><path d="M5 3h2v5H5z" fill="#999"/></svg>Pan View</span>
      <svg class="m"><use href="#mouse"/><path d="M6 2h4v5H6z" fill="#999"/></svg>
      <em>3.3.2</em>
    </footer>
  </main>

  <aside class="explorer">
    <nav class="xtabs"><button class="file">File</button><button class="active">Home</button><button>Share</button><button>View</button><button class="ctx">Picture Tools</button></nav>
    <div class="ribbon">
      <div class="group clipboard">
        <div class="items">
          <button class="big"><svg class="b"><use href="#tack"/></svg>Pin to Quick<br>access</button>
          <button class="big"><svg class="b"><use href="#pages"/></svg>Copy</button>
          <button class="big faded"><svg class="b"><use href="#clip"/></svg>Paste</button>
          <div class="minis"><button><svg><use href="#cut"/></svg></button><button><svg><use href="#path"/></svg></button><button><svg><use href="#shortcut"/></svg></button></div>
        </div>
        <span>Clipboard</span>
      </div>
      <div class="group organize">
        <div class="items">
          <div class="lines"><button><svg><use href="#moveto"/></svg>Move to<b></b></button><button><svg><use href="#copyto"/></svg>Copy to<b></b></button></div>
          <div class="lines second"><button><svg><use href="#delete"/></svg>Delete<b></b></button><button><svg><use href="#rename"/></svg>Rename</button></div>
        </div>
        <span>Organize</span>
      </div>
      <div class="group new">
        <div class="items">
          <button class="big"><svg class="b"><use href="#bigfolder"/></svg>New<br>folder</button>
          <div class="minis two"><button><svg><use href="#newitem"/></svg><b></b></button><button><svg><use href="#easy"/></svg><b></b></button></div>
        </div>
        <span>New</span>
      </div>
      <div class="group opengrp">
        <div class="items">
          <button class="big"><svg class="b"><use href="#check"/></svg>Properties<b></b></button>
          <div class="minis"><button><svg><use href="#openwith"/></svg><b></b></button><button><svg><use href="#edit"/></svg></button><button><svg><use href="#history"/></svg></button></div>
        </div>
        <span>Open</span>
      </div>
      <div class="group select">
        <div class="lines three"><button><svg><use href="#selall"/></svg>Select all</button><button><svg><use href="#selnone"/></svg>Select none</button><button><svg><use href="#selinv"/></svg>Invert selection</button></div>
        <span>Select</span>
      </div>
    </div>
    <div class="nav">
      <button aria-label="Back"><svg><use href="#back"/></svg></button>
      <button aria-label="Forward" class="flip"><svg><use href="#back"/></svg></button>
      <button aria-label="Recent" class="small"><svg><use href="#down"/></svg></button>
      <button aria-label="Up" class="up"><svg><use href="#back"/></svg></button>
      <div class="address">
        <svg><use href="#winfolder"/></svg><i>›</i><a href="#">Ma...</a><i>›</i><a href="#">Weath...</a>
        <button class="end" aria-label="History"><svg><use href="#down"/></svg></button>
        <button class="reload" aria-label="Refresh"><svg><use href="#refresh"/></svg></button>
      </div>
      <label class="xsearch"><svg><use href="#lens"/></svg><input type="search" placeholder="Search Weather"></label>
    </div>
    <table>
      <colgroup><col class="c1"><col class="c2"><col class="c3"><col class="c4"></colgroup>
      <thead><tr><th>Name<svg class="sort" viewBox="0 0 10 6"><path d="M1 5l4-4 4 4" fill="none" stroke="#888"/></svg></th><th>Date modified</th><th>Type</th><th>Size</th></tr></thead>
      <tbody id="files"></tbody>
    </table>
    <footer><span>31 items</span><span>1 item selected</span></footer>
  </aside>
  <script src="script.js"></script>
</body>
</html>
```

FILE: styles.css
```css
* {
  box-sizing: border-box;
  margin: 0;
  padding: 0;
}

body {
  display: flex;
  height: 100vh;
  padding-top: 27px;
  background: #000;
  overflow: hidden;
  font-family: "Noto Sans", "DejaVu Sans", sans-serif;
  font-size: 11px;
  color: #dcdcdc;
}

button, input, select {
  font: inherit;
  color: inherit;
  background: none;
  border: 0;
  outline: 0;
  min-width: 0;
}

select, input { appearance: none; }
h3, h4, i, em, th { font-size: inherit; font-weight: 400; font-style: normal; }
.sheet { position: absolute; width: 0; height: 0; }
svg { display: block; flex: none; }
.i { width: 16px; height: 16px; }
.c { width: 10px; height: 16px; }
.flip svg { transform: scaleX(-1); }
.push { margin-left: auto; }

/* ---------- Blender ---------- */
.blender {
  flex: 1;
  min-width: 0;
  display: flex;
  flex-direction: column;
  background: #1a1a1a;
}

.topbar {
  display: flex;
  align-items: center;
  height: 27px;
  padding: 0 8px 0 11px;
  background: #1d1d1d;
}

.menus { display: flex; gap: 16px; }
.topbar .menus { width: 231px; padding-left: 10px; }
.workspaces { display: flex; flex: 1; gap: 1px; align-self: flex-end; height: 21px; margin-left: 10px; }
.workspaces button { padding: 0 10px; color: #8f8f8f; white-space: nowrap; }
.workspaces .active { background: #303030; color: #fff; border-radius: 4px 4px 0 0; }

.idblock {
  display: flex;
  align-items: center;
  width: 200px;
  height: 20px;
  margin-left: 6px;
  background: #1c1c1c;
  border: 1px solid #3a3a3a;
  border-radius: 4px;
}

.idblock button { display: flex; padding: 0 2px; height: 18px; align-items: center; }
.idblock button:first-child { width: 32px; padding-left: 3px; border-right: 1px solid #3a3a3a; }
.idblock input { flex: 1; padding-left: 7px; }
.lit { background: #4c4c4c; }

.areas { flex: 1; display: flex; gap: 4px; padding: 0 4px 0 2px; min-height: 0; }
.left { flex: 1; min-width: 0; display: flex; flex-direction: column; gap: 4px; }
.view3d { flex: 1; min-height: 0; display: flex; flex-direction: column; }
.right { width: 349px; display: flex; flex-direction: column; gap: 3px; padding-bottom: 2px; }

.bar {
  display: flex;
  align-items: center;
  flex: none;
  height: 26px;
  padding: 0 8px 0 10px;
  gap: 8px;
  background: #303030;
  border-radius: 5px 5px 0 0;
}

.bar .menus { gap: 16px; }

.drop, .pick, .find, .boxed {
  display: flex;
  align-items: center;
  height: 20px;
  padding: 0 2px 0 4px;
  background: #262626;
  border: 1px solid #3a3a3a;
  border-radius: 4px;
}

.drop { gap: 1px; }
.pick select { flex: 1; padding-left: 6px; }
.mode { width: 113px; }
.global { width: 82px; }
.orient { width: 106px; }
.drag { width: 77px; padding-left: 1px; }
.viewmenus { margin: 0 14px 0 3px; }
.joined { display: flex; align-items: center; }
.joined button { display: flex; align-items: center; justify-content: center; height: 20px; min-width: 20px; }
.joined .drop { border-radius: 0 4px 4px 0; }
.on { background: #4772b3; color: #fff; }
.sq { display: flex; align-items: center; justify-content: center; width: 20px; height: 20px; border-radius: 3px; }
.tiny { background: #262626; }
.dim { color: #777; }
button.lit.dim { color: #999; }

.toolbar2 { height: 28px; background: #2a2a2a; border-radius: 0; padding-right: 7px; gap: 4px; }
.toolbar2 .drop { border-radius: 3px; }
.toolbar2 .joined .drop { padding: 0 3px; }
.options { gap: 6px; padding-left: 7px; }
.cap { padding-left: 36px; }
.orient + .cap { padding-left: 9px; }
.drag { margin-left: 6px; }
.assets { margin-left: 12px; }
.ball { margin: 0 2px; }
.find { background: #1d1d1d; width: 116px; }
.find input { width: 80px; flex: 1; }

.canvas { flex: 1; position: relative; min-height: 0; background: #000; padding-right: 20px; overflow: hidden; }
.scene3d { width: 100%; height: 100%; }
.axis { font-size: 11px; fill: #111; text-anchor: middle; }
.info { position: absolute; left: 69px; top: 8px; line-height: 18px; color: #fff; font-weight: 500; }

.tools { position: absolute; left: 7px; top: 8px; display: flex; flex-direction: column; gap: 5px; }
.tools div { background: #262626; border: 1px solid #383838; border-radius: 4px; overflow: hidden; }
.tools button { display: flex; align-items: center; justify-content: center; width: 42px; height: 36px; }
.tools button + button { border-top: 1px solid #383838; }
.tools svg { width: 28px; height: 28px; }

.npanel { position: absolute; right: 27px; top: 3px; width: 280px; display: flex; flex-direction: column; gap: 2px; }
.npanel section { background: #3a3a3a; border-radius: 4px; }
.npanel section:first-child { padding-bottom: 10px; }
.npanel h3, .pbody h3 { display: flex; align-items: center; height: 26px; padding: 0 7px 0 8px; gap: 5px; color: #e6e6e6; }
.npanel h3 { font-weight: 500; }
.grip { width: 12px; height: 6px; margin-left: auto; color: #777; }
.stack { display: flex; flex-direction: column; gap: 7px; padding: 9px 9px 0; }
.stack > * { height: 19px; line-height: 19px; }
.stack label, .stack p { color: #c4c4c4; }
.stack .apart { margin-top: 12px; }
.stack button { background: #545454; border-radius: 3px; }
.stack .hover { background: #656565; color: #fff; }
.wide { background: #262626; border: 0; border-radius: 3px; padding-left: 1px; }
.tip { position: absolute; left: 120px; top: 234px; padding: 0 15px 0 13px; line-height: 33px; background: #191919; border-radius: 4px; white-space: nowrap; }
.pointer { position: absolute; left: 151px; top: 214px; width: 12px; height: 19px; }

.vtabs { position: absolute; right: 0; top: 0; bottom: 0; width: 20px; padding: 5px 2px 0 0; display: flex; flex-direction: column; gap: 5px; background: #1a1a1a; }
.vtabs button { writing-mode: vertical-rl; transform: rotate(180deg); padding: 7px 0; width: 18px; border: 1px solid #333; border-radius: 4px 0 0 4px; color: #bbb; }
.vtabs .active { background: #303030; color: #fff; }

.timeline { height: 37px; overflow: hidden; }
.timeline .bar { gap: 6px; }
.timeline .drop { border-radius: 4px; }
.timeline .joined .drop { gap: 6px; padding-left: 5px; }
.bar > .menus { padding-left: 1px; }
.timeline .menus { padding-left: 5px; gap: 17px; }
.rec { margin-left: 54px; }
.play { margin: 0 14px 0 21px; }
.field { height: 20px; background: #545454; border-radius: 3px; text-align: center; }
.frame { width: 77px; }
.se { display: flex; align-items: center; width: 90px; padding: 0 14px 0 16px; border-left: 1px solid #444; border-radius: 0; }
.se input { flex: 1; width: 10px; text-align: right; }
.scroll { height: 7px; margin: 0 8px; background: #545454; border-radius: 4px; }
.ruler { display: flex; height: 4px; padding: 0 20px 0 12px; overflow: hidden; color: #bbb; line-height: 10px; }
.ruler span { flex: 1; text-align: center; }
.ruler .now { background: #4772b3; flex: none; width: 26px; margin: 0 16px; color: #fff; }

.outliner { flex: 0 0 452px; display: flex; flex-direction: column; background: #282828; border-radius: 5px; overflow: hidden; }
.outliner .find { margin-left: 12px; }
.outliner .bar { padding-right: 6px; }
.outliner .push { padding-right: 1px; }
.rows { flex: 1; display: flex; flex-direction: column; padding: 5px 0 3px; position: relative; }
.rows::before { content: ""; position: absolute; left: 30px; top: 155px; bottom: 0; width: 1px; background: #666; }
.orow { flex: 1; display: flex; align-items: center; padding: 0 12px 0 26px; color: #d6d6d6; }
.orow:nth-child(even) { background: #2b2b2b; }
.orow .tri { width: 10px; height: 10px; margin-right: 9px; }
.orow .i { width: 15px; height: 15px; }
.orow .name { padding-left: 7px; white-space: nowrap; overflow: hidden; }
.orow .i + .i { margin-left: 10px; }
.orow .kids { display: flex; align-items: flex-end; margin-left: 26px; }
.orow .kids b { margin-left: -6px; font-size: 9px; line-height: 10px; font-weight: 400; color: #eee; background: #282828; border-radius: 3px; }
.orow .toggles { display: flex; align-items: center; gap: 6px; margin-left: auto; padding-left: 5px; }
.orow .toggles .i { margin: 0; }
.orow .toggles input { width: 11px; height: 11px; border: 1px solid currentColor; margin-right: 2px; }
.orow .toggles input:checked { background: #e6e6e6; }
.orow .toggles input:checked::before { content: ""; display: block; width: 7px; height: 4px; margin: 1px; border: solid #222; border-width: 0 0 2px 2px; transform: rotate(-45deg); }
.rows .child { padding-left: 47px; }
.rows .off { color: #7d7d7d; }
.rows .sel { background: #334d80; color: #7fa7e6; }

.properties { flex: 1; display: flex; flex-direction: column; background: #303030; border-radius: 5px; overflow: hidden; min-height: 0; }
.properties .find { margin: 0 auto 0 71px; }
.properties .drop { margin-right: -5px; }
.boxed { padding: 0 4px; }
.body { display: flex; flex: 1; min-height: 0; }
.ptabs { width: 29px; background: #1a1a1a; padding-top: 9px; }
.ptabs button { display: flex; align-items: center; justify-content: center; width: 29px; height: 29px; color: #bdbdbd; }
.ptabs .gap { margin-top: 8px; }
.ptabs .gap2 { margin-top: 18px; }
.ptabs .active { background: #303030; color: #e6e6e6; }
.ptabs .red { color: #b5594f; }
.pbody { flex: 1; padding: 0 6px 0 9px; display: flex; flex-direction: column; gap: 2px; }
.pbody > * { flex: none; }
.pbody section { background: #3a3a3a; border-radius: 4px; }
.pbody .output { flex: 1 0 auto; padding: 0 9px; }
.output h3 { margin: 0 -9px; }
.crumb { display: flex; align-items: center; gap: 8px; height: 39px; padding: 0 3px; }
.pinned { margin-left: auto; color: #999; }
.presets { margin: 0 7px 0 auto; }
.presets + .grip { margin-left: 0; }
.frames { padding: 9px 9px 3px; }
.row { display: flex; align-items: center; justify-content: flex-end; gap: 10px; height: 20px; }
.row > :last-child { width: 167px; flex: none; }
.frames .field { border-radius: 0; border-bottom: 1px solid #474747; }
h4 { display: flex; align-items: center; gap: 5px; height: 20px; padding-left: 24px; margin: 10px 0 4px; }
.tick { display: flex; align-items: center; gap: 4px; }
.tick input { width: 13px; height: 13px; background: #545454; border-radius: 2px; }
.tick input:checked { background: #4772b3; }
.tick input:checked::before { content: ""; display: block; width: 9px; height: 5px; margin: 2px; border: solid #fff; border-width: 0 0 2px 2px; transform: rotate(-45deg); }
.pbody .tight { gap: 2px; }
.filebox { display: flex; align-items: center; gap: 12px; height: 29px; margin: 10px 0 13px; padding: 0 6px; background: #2c2c2c; border-radius: 3px; white-space: nowrap; overflow: hidden; }
.pathbox { display: flex; height: 18px; margin-bottom: 7px; }
.pathbox input { flex: 1; padding-left: 7px; background: #1d1d1d; border-radius: 3px 0 0 3px; }
.pathbox button { width: 21px; padding: 1px 2px; background: #545454; }
.fields { display: flex; flex-direction: column; gap: 3px; }
.fields .apart { margin-top: 3px; }
.seg { display: flex; height: 20px; gap: 1px; }
.seg button { flex: 1; background: #545454; }
.seg .on { background: #4772b3; }
.slider { position: relative; height: 20px; }
.slider input { width: 100%; height: 20px; border-radius: 3px; background: linear-gradient(90deg, #4772b3 14%, #545454 0); }
.slider input::-webkit-slider-thumb { appearance: none; width: 0; }
.slider output { position: absolute; inset: 0; line-height: 20px; text-align: center; pointer-events: none; }

.status { display: flex; align-items: center; height: 20px; padding: 0 10px 0 13px; background: #1d1d1d; color: #9a9a9a; }
.status .m { width: 12px; height: 16px; }
.status span { display: flex; align-items: center; gap: 11px; width: 220px; margin-left: 209px; }
.status em { margin-left: auto; }

/* ---------- File Explorer ---------- */
.explorer {
  flex: 0 0 670px;
  display: flex;
  flex-direction: column;
  overflow: hidden;
  background: linear-gradient(90deg, #e4e4e4, #fff 14px);
  border-left: 1px solid #777;
  color: #333;
  font-family: "Open Sans", "Noto Sans", sans-serif;
  font-size: 12px;
}

.xtabs { display: flex; height: 25px; border-bottom: 1px solid #dadbdc; flex: none; background: #fff; }
.xtabs button { width: 60px; height: 25px; }
.xtabs .file { width: 58px; background: #0063b1; color: #fff; font-weight: 600; }
.xtabs .active { background: #f5f6f7; border: solid #dadbdc; border-width: 0 1px; }
.xtabs .ctx { width: 98px; font-size: 11px; border: solid #dadbdc; border-width: 0 1px; height: 24px; }

.ribbon { display: flex; height: 95px; flex: none; background: #f5f6f7; border-bottom: 1px solid #dadbdc; font-size: 11px; }
.ribbon svg { width: 16px; height: 18px; }
.ribbon button { white-space: nowrap; line-height: 17px; }
.ribbon b { display: inline-block; border: 3px solid transparent; border-top-color: #333; border-bottom: 0; margin: 0 3px; }
.group { flex: none; display: flex; flex-direction: column; border-right: 1px solid #e0e1e2; margin-top: 4px; }
.group > span { text-align: center; color: #666; line-height: 16px; margin-bottom: 1px; }
.items { display: flex; flex: 1; padding-left: 3px; }
.clipboard { width: 194px; }
.clipboard .minis { padding-left: 8px; }
.organize { width: 173px; }
.new { width: 86px; }
.opengrp { width: 105px; }
.select { width: 119px; border: 0; }
.big { display: flex; flex-direction: column; align-items: center; padding: 6px 6px 0; align-self: flex-start; }
.ribbon .b { width: 26px; height: 30px; margin-bottom: 5px; }
.big b { margin-top: 4px; }
.faded { color: #888; }
.minis { display: flex; flex-direction: column; gap: 5px; padding: 2px 0 0 2px; }
.minis button { display: flex; align-items: center; height: 18px; }
.lines { display: flex; flex-direction: column; gap: 12px; padding: 11px 0 0 5px; }
.lines button { display: flex; align-items: center; gap: 4px; height: 18px; }
.second { border-left: 1px solid #e0e1e2; padding-left: 8px; margin-left: 10px; }
.three { gap: 5px; padding: 4px 0 0 8px; flex: 1; }

.nav { display: flex; align-items: center; height: 43px; padding-left: 12px; gap: 14px; color: #666; flex: none; }
.nav svg { width: 14px; height: 16px; }
.nav .small { margin: 0 -4px; }
.up svg { transform: rotate(90deg); }
.address { display: flex; align-items: center; width: 240px; height: 32px; margin-left: -6px; border: 1px solid #d9d9d9; padding-left: 4px; gap: 8px; }
.address a { color: #222; text-decoration: none; }
.address .end { margin-left: auto; }
.address .reload { padding: 0 9px; height: 30px; border-left: 1px solid #d9d9d9; }
.xsearch { flex: 1; display: flex; align-items: center; gap: 14px; height: 32px; border: 1px solid #d9d9d9; border-right: 0; padding-left: 14px; margin-left: -2px; }
.xsearch input { flex: 1; }
.xsearch input::placeholder { color: #666; }

table { width: 625px; margin-left: 13px; table-layout: fixed; border-collapse: collapse; }
.c1 { width: 270px; }
.c2 { width: 151px; }
.c3 { width: 125px; }
th { position: relative; height: 34px; padding: 0 0 4px 7px; text-align: left; color: #5b6470; background: linear-gradient(#e5e5e5, #e5e5e5) right 3px / 1px 27px no-repeat; }
th:first-child { padding-left: 5px; }
.sort { position: absolute; left: 129px; top: 2px; width: 10px; height: 6px; }
td { height: 22px; padding-left: 7px; color: #6d6d6d; white-space: nowrap; }
.fname { display: flex; align-items: center; gap: 5px; color: #222; }
.fname svg { width: 14px; height: 18px; }
.picked { background: #d9d9d9; }
.explorer footer { display: flex; gap: 22px; margin-top: auto; padding: 0 14px 1px; line-height: 20px; color: #444; }
```

FILE: script.js
```js
const use = (id, cls = "i") => `<svg class="${cls}"><use href="#${id}"/></svg>`;

// outliner: name, child count or kind
const collections = [
  ["Basic", "57"], ["Christmas", "20"], ["Food & Drinks", "60"], ["Medic", "14"],
  ["Others", "99"], ["School", "30"], ["Weather", "open"], ["Cloud.001", "mesh"],
  ["Cloud Raining"], ["Cloud Raining Ligthening", "sel"], ["Cloud Raining Moon"], ["Cloud Raining Sun"],
  ["Cloud Snow Flakes", "lib"], ["Cloud Snow Flakes Moon", "lib"], ["Cloud Snow Flakes Sun", "lib"],
  ["Cloud Wind", "lib"], ["Compass.001", "lib"], ["Lightening Clouds", "lib"],
  ["Lightening Clouds Mooney", "lib"], ["Lightening Clouds Sunny", "lib"]
];

document.getElementById("rows").innerHTML = collections.map(([name, kind], i) => {
  const off = i > 7;
  const arrow = kind === "open" ? "M1 2h8L5 9z" : off ? "" : "M2 1l7 4-7 4z";
  let after = "";
  if (/^\d/.test(kind)) after = `<span class="kids">${use("coll")}<b>${kind}</b></span>`;
  if (kind === "mesh") after = `<span class="kids">${use("mesh")}</span>`;
  return `<div class="orow ${i > 6 ? "child" : ""} ${off ? "off" : ""} ${kind === "sel" ? "sel" : ""}">
    <svg class="tri" viewBox="0 0 10 10"><path d="${arrow}" fill="currentColor"/></svg>
    ${use("coll")}${kind === "lib" ? use("books") : ""}<span class="name">${name.replace("&", "&amp;")}</span>${after}
    <span class="toggles"><input type="checkbox" aria-label="${name}" ${off ? "" : "checked"}>
    ${["cursor", "eye", "monitor", "camera"].map(n => use(n)).join("")}</span></div>`;
}).join("");

// file list: minute the folder was written, then names
const files = {
  17: ["Cloud Raining", "Cloud Raining Ligthening"],
  18: ["Cloud Raining Moon", "Cloud Raining Sun", "Cloud Snow Flakes", "Cloud Snow Flakes Moon", "Cloud Snow Flakes Sun", "Cloud Wind", "Cloud.001"],
  19: ["Compass.001", "Lightening Clouds", "Lightening Clouds Mooney", "Lightening Clouds Sunny", "Lightening Under Stormyclouds", "Moon", "Moon Under Clouds"],
  20: ["Rain", "Raining Under Stormyclouds", "Snow Flake", "Sun", "Sun Horizon", "Sun Over Water", "Sun Under Clouds"],
  21: ["Sun Under Stormyclouds", "Sun_2", "Thermometer High Temprature", "Thermometer Low Temprature", "Thermometer Moderate Temprature", "Umbrella", "Umbrella Rain"],
  22: ["Weather Cone"]
};

document.getElementById("files").innerHTML = Object.entries(files).map(([min, names]) =>
  names.map(n => `<tr class="${n === "Umbrella Rain" ? "picked" : ""}">
    <td><div class="fname"><svg><use href="#winfolder"/></svg>${n}</div></td>
    <td>3/17/2023 11:${min} PM</td><td>File folder</td><td></td></tr>`).join("")).join("");

// timeline ruler
let marks = "";
for (let f = -70; f <= 70; f += 10) marks += `<span class="${f ? "" : "now"}">${f}</span>`;
document.getElementById("ruler").innerHTML = marks;

// mesh loops on each lobe: cx, cy, radius
const lobes = [[748, 575, 400], [338, 700, 270], [1240, 675, 270], [790, 300, 210], [430, 370, 200], [1035, 890, 135]];
let rings = "";
lobes.forEach(([x, y, r], n) => {
  for (let a = 3; a < 13; a++) {
    const k = r * Math.sin(a * 0.12);
    rings += `<circle cx="${x}" cy="${y}" r="${k}" opacity="${a % 3 ? 0.25 : 0.6}"/>`;
  }
  if (n === 0 || n === 2) rings += `<circle cx="${x}" cy="${y}" r="26"/>`;
});
document.getElementById("rings").innerHTML = rings;

let balls = "";
[[423, 195, 96], [1045, 498, 148]].forEach(([x, y, r]) => {
  balls += `<circle cx="${x}" cy="${y}" r="${r}" fill="url(#ballfill)" stroke-width="5"/><circle cx="${x}" cy="${y}" r="${r}" fill="url(#grid)" stroke="none"/>`;
  for (let a = 4; a < 12; a += 1) {
    balls += `<circle cx="${x}" cy="${y}" r="${r * Math.sin(a * 0.13)}" fill="none" stroke-width="2" opacity=".45"/>`;
  }
  balls += `<circle cx="${x}" cy="${y}" r="${r - 12}" fill="none" stroke-width="24" stroke-dasharray="3 9" opacity=".5"/>`;
});
document.getElementById("balls").innerHTML = balls;
```
